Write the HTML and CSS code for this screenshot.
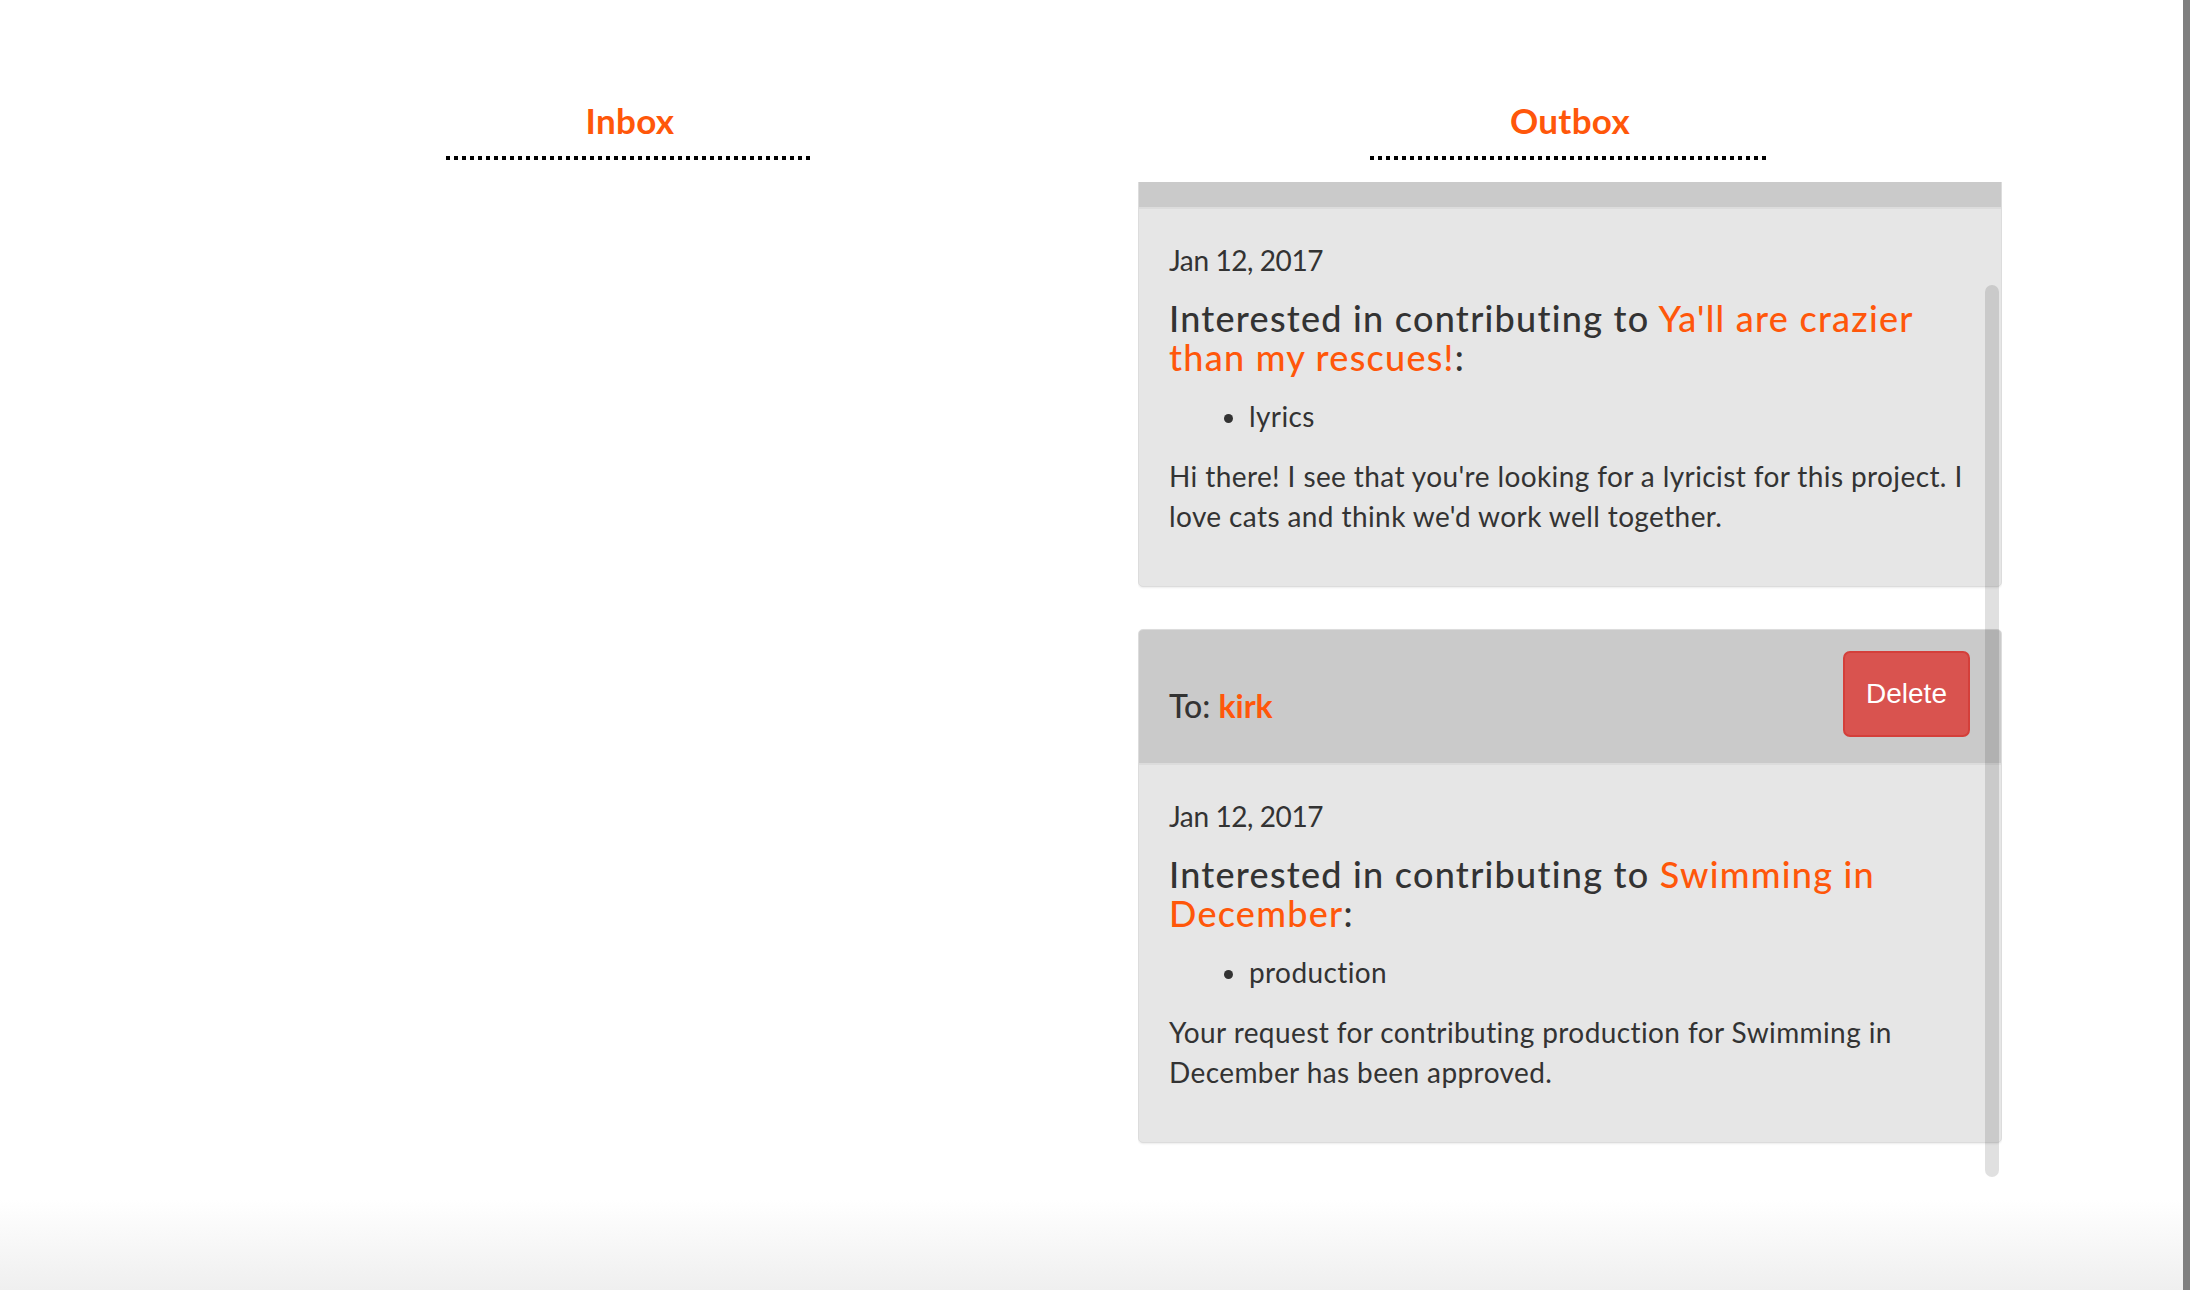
FILE: index.html
```html
<!DOCTYPE html>
<html lang="en">
<head>
<meta charset="utf-8">
<title>Messages</title>
<link rel="stylesheet" href="styles.css">
</head>
<body>
<div class="page">
  <main class="main">
    <div class="board">
      <section class="column">
        <div class="col-head"><h2 class="col-title">Inbox</h2></div>
      </section>
      <section class="column column-out">
        <div class="col-head"><h2 class="col-title">Outbox</h2></div>
        <div class="outbox-scroll">
          <div class="outbox-list">
            <article class="msg">
              <header class="msg-head msg-head-scrolled"></header>
              <div class="msg-body">
                <p class="msg-date">Jan 12, 2017</p>
                <h4 class="msg-title">Interested in contributing to <a class="hl-title">Ya'll are crazier than my rescues!</a>:</h4>
                <ul class="msg-roles"><li>lyrics</li></ul>
                <p class="msg-text">Hi there! I see that you're looking for a lyricist for this project. I love cats and think we'd work well together.</p>
              </div>
            </article>
            <article class="msg">
              <header class="msg-head">
                <h4 class="msg-to">To: <a class="hl">kirk</a></h4>
                <button class="btn-delete" type="button">Delete</button>
              </header>
              <div class="msg-body">
                <p class="msg-date">Jan 12, 2017</p>
                <h4 class="msg-title">Interested in contributing to <a class="hl-title">Swimming in December</a>:</h4>
                <ul class="msg-roles"><li>production</li></ul>
                <p class="msg-text">Your request for contributing production for Swimming in December has been approved.</p>
              </div>
            </article>
          </div>
          <div class="scroll-thumb"></div>
        </div>
      </section>
    </div>
    <div class="bottom-fade"></div>
  </main>
  <div class="edge-bar"></div>
</div>
</body>
</html>
```

FILE: styles.css
```css
html, body {
  margin: 0;
  padding: 0;
  background: #fff;
}

body {
  font-family: "Lato", "Open Sans", sans-serif;
  color: #333;
}

.page {
  display: flex;
  height: 1290px;
  overflow: hidden;
}

.main {
  flex: 1;
  display: flex;
  flex-direction: column;
}

.edge-bar {
  width: 7px;
  background: #7f7f7f;
}

.board {
  display: grid;
  grid-template-columns: 940px 940px;
  padding-left: 160px;
}

.column-out {
  padding: 0 38px;
}

.col-head {
  display: flex;
  justify-content: center;
}

.col-title {
  margin: 100px 0 0;
  padding: 0 140px 20px;
  font-weight: 700;
  font-size: 35px;
  line-height: 40px;
  letter-spacing: 0.3px;
  color: #ff570a;
  background-image: linear-gradient(90deg, #000 4px, transparent 4px);
  background-size: 8px 4px;
  background-repeat: repeat-x;
  background-position: left bottom;
}

.outbox-scroll {
  position: relative;
  margin-top: 22px;
  height: 998px;
  overflow: hidden;
}

.outbox-list {
  margin-top: -109px;
}

.msg {
  background: #e6e6e6;
  border: 1px solid #dcdcdc;
  border-radius: 5px;
  margin-bottom: 42px;
  box-shadow: 0 1px 2px rgba(0, 0, 0, 0.08);
  overflow: hidden;
}

.msg-head {
  display: flex;
  justify-content: space-between;
  align-items: flex-start;
  background: #cacaca;
  border-bottom: 2px solid #dcdcdc;
  padding: 21px 31px 26px 30px;
}

.msg-head-scrolled {
  height: 135px;
  box-sizing: border-box;
}

.msg-to {
  margin: 35px 0 0;
  font-weight: 500;
  font-size: 32px;
  line-height: 40px;
  color: #333;
}

.hl {
  color: #ff570a;
  font-weight: 700;
}

.btn-delete {
  height: 86px;
  width: 127px;
  padding: 0;
  background: #d9534f;
  border: 2px solid #d43f3a;
  border-radius: 7px;
  color: #fff;
  font-family: "Liberation Sans", Arial, sans-serif;
  font-size: 28px;
}

.msg-body {
  padding: 31px 31px 30px 30px;
  font-size: 28px;
  line-height: 40px;
  letter-spacing: 0.4px;
}

.msg-date {
  margin: 0 0 19px;
  letter-spacing: -0.4px;
}

.msg-title {
  margin: 0 0 19px;
  font-weight: 500;
  font-size: 36px;
  line-height: 39px;
  letter-spacing: 1.25px;
  color: #333;
}

.hl-title {
  color: #ff570a;
}

.msg-roles {
  margin: 0 0 20px;
  padding-left: 80px;
}

.msg-text {
  margin: 0 0 20px;
}

.scroll-thumb {
  position: absolute;
  top: 103px;
  right: 3px;
  width: 14px;
  height: 892px;
  border-radius: 7px;
  background: rgba(0, 0, 0, 0.12);
}

.bottom-fade {
  margin-top: auto;
  height: 90px;
  background: linear-gradient(#fff, #efefef);
}
```
